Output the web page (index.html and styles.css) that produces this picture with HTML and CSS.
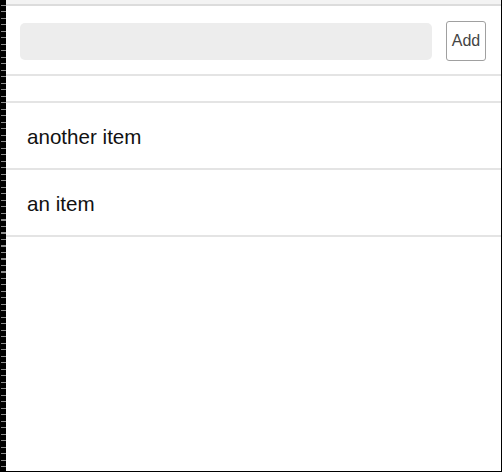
FILE: index.html
```html
<!DOCTYPE html>
<html>
<head>
<meta charset="utf-8">
<link rel="stylesheet" href="styles.css">
</head>
<body>
<div class="frame">
  <div class="strip"></div>
  <div class="main">
    <div class="topband"></div>
    <form class="add-form">
      <input class="field" type="text">
      <button class="add-btn" type="button">Add</button>
    </form>
    <div class="spacer"></div>
    <ul class="list">
      <li class="item">another item</li>
      <li class="item">an item</li>
    </ul>
  </div>
</div>
</body>
</html>
```

FILE: styles.css
```css
html, body {
  margin: 0;
  padding: 0;
  background: #fff;
}
.frame {
  display: flex;
  width: 502px;
  height: 472px;
  box-sizing: border-box;
  border-right: 1px solid #000;
  border-bottom: 1px solid #000;
  font-family: "Liberation Sans", Arial, sans-serif;
}
.strip {
  width: 6px;
  flex: none;
  background:
    repeating-linear-gradient(to bottom, transparent 0 5px, #8a8a8a 5px 6px, transparent 6px 6.5px),
    #000;
  background-size: 5px 100%, 100% 100%;
  background-repeat: no-repeat;
  background-position: 1px 0, 0 0;
}
.main {
  flex: 1;
  display: flex;
  flex-direction: column;
}
.topband {
  height: 4px;
  background: #f3f3f3;
  border-bottom: 2px solid #dcdcdc;
}
.add-form {
  display: flex;
  align-items: center;
  gap: 14px;
  margin: 0;
  padding: 15px 15px 13px 14px;
  border-bottom: 2px solid #e4e4e4;
}
.field {
  flex: 1;
  height: 37px;
  box-sizing: border-box;
  border: none;
  border-radius: 5px;
  background: #ededed;
  outline: none;
}
.add-btn {
  width: 40px;
  height: 40px;
  box-sizing: border-box;
  padding: 0;
  background: #fff;
  border: 1px solid #a0a0a0;
  border-radius: 3px;
  font-family: "Liberation Sans", Arial, sans-serif;
  font-size: 16px;
  color: #444;
}
.spacer {
  height: 25px;
  border-bottom: 2px solid #e4e4e4;
}
.list {
  list-style: none;
  margin: 0;
  padding: 0;
}
.item {
  height: 62px;
  display: flex;
  align-items: center;
  padding-left: 21px;
  padding-top: 3px;
  font-size: 20.6px;
  color: #111;
  border-bottom: 2px solid #e4e4e4;
}
```
